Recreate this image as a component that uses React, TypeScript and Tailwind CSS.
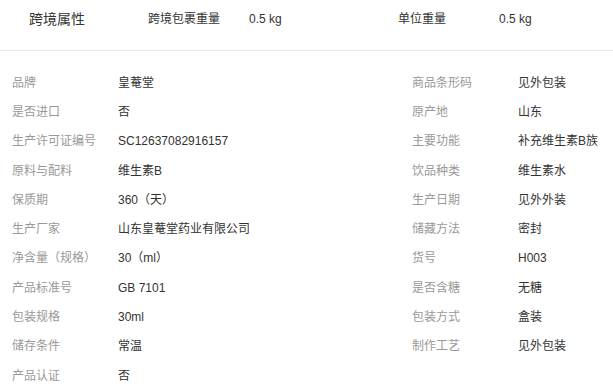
const crossBorder = [
  { label: '跨境包裹重量', value: '0.5 kg' },
  { label: '单位重量', value: '0.5 kg' },
];

const attrs: [string, string][] = [
  ['品牌', '皇菴堂'],
  ['商品条形码', '见外包装'],
  ['是否进口', '否'],
  ['原产地', '山东'],
  ['生产许可证编号', 'SC12637082916157'],
  ['主要功能', '补充维生素B族'],
  ['原料与配料', '维生素B'],
  ['饮品种类', '维生素水'],
  ['保质期', '360（天）'],
  ['生产日期', '见外外装'],
  ['生产厂家', '山东皇菴堂药业有限公司'],
  ['储藏方法', '密封'],
  ['净含量（规格）', '30（ml）'],
  ['货号', 'H003'],
  ['产品标准号', 'GB 7101'],
  ['是否含糖', '无糖'],
  ['包装规格', '30ml'],
  ['包装方式', '盒装'],
  ['储存条件', '常温'],
  ['制作工艺', '见外包装'],
  ['产品认证', '否'],
];

export default function App() {
  return (
    <div
      className="w-[613px] h-[391px] overflow-hidden bg-white text-[#333]"
      style={{ fontFamily: '"Liberation Sans", Arial, "Noto Sans CJK SC", sans-serif' }}
    >
      <div className="h-[51px] border-b border-[#e8e8e8]">
        <div className="flex h-[38px] items-center pl-[29px] text-xs">
          <span className="w-[119px] text-sm">跨境属性</span>
          <span className="w-[101px]">{crossBorder[0].label}</span>
          <span className="w-[149px]">{crossBorder[0].value}</span>
          <span className="w-[101px]">{crossBorder[1].label}</span>
          <span>{crossBorder[1].value}</span>
        </div>
      </div>

      <div className="grid grid-cols-[400px_1fr] pl-3 pt-[17px] text-xs">
        {attrs.map(([label, value]) => (
          <div key={label} className="flex h-[29.3px] items-center">
            <span className="w-[106px] text-[#999]">{label}</span>
            <span>{value}</span>
          </div>
        ))}
      </div>
    </div>
  );
}
